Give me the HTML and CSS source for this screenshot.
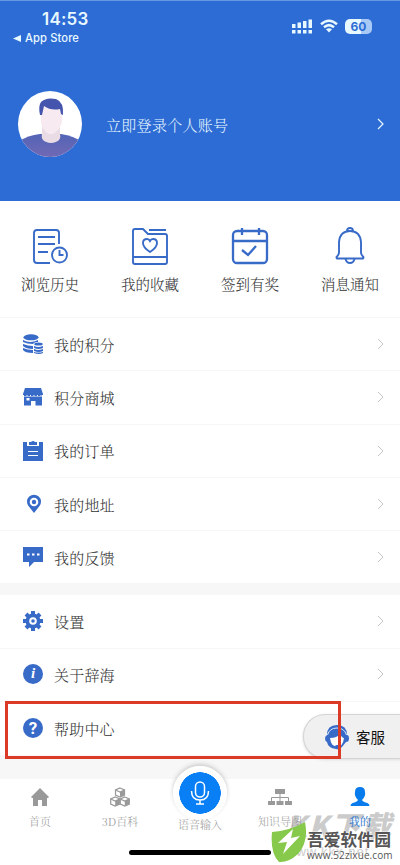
FILE: index.html
```html
<!DOCTYPE html>
<html lang="zh-CN">
<head>
<meta charset="utf-8">
<title>我的</title>
<link rel="stylesheet" href="styles.css">
</head>
<body>
<main class="screen">
  <header class="hero">
    <div class="status">
      <div class="clock"><b>14:53</b><span><svg width="8" height="7" viewBox="0 0 8 7" fill="#e8f8ff"><path d="M0 3.500L8 0v7z"/></svg>App Store</span></div>
      <div class="signals">
        <svg width="21" height="16" viewBox="0 0 21 16" fill="#e8f8ff"><path d="M0 5h3.500v4H0zM5.500 3.500H9V9H5.500zM11 2h3.500v7H11zM16.500 0.500H20V9h-3.500zM0 11h3.500v3.500H0zM5.500 11H9v3.500H5.500zM11 11h3.500v3.500H11zM16.500 11H20v3.500h-3.500z"/></svg>
        <svg width="18" height="14" viewBox="0 0 18 14" fill="none" stroke="#e8f8ff" stroke-width="2.500"><path d="M1 5.200q8-7 16 0M4 8.300q5-4.300 10 0"/><path d="M6 10.200q3-2 6 0L9 13.500z" fill="#e8f8ff" stroke="none"/></svg>
        <div class="battery">60</div>
      </div>
    </div>
    <div class="profile">
      <svg class="avatar" viewBox="0 0 64 66"><defs><clipPath id="face"><ellipse cx="32" cy="33" rx="32" ry="33"/></clipPath><linearGradient id="shirt" x1="0" y1="0" x2="0" y2="1"><stop stop-color="#5364b6"/><stop offset="1" stop-color="#7069b5"/></linearGradient></defs><g clip-path="url(#face)"><path fill="#fff" d="M0 0h64v66H0z"/><path fill="url(#shirt)" d="M0 66V51Q10 44 22 43H43Q56 45 64 51V66z"/><path fill="#e9dce5" d="M24 34h18v9q2 8-9 9-11-1-9-9z"/><path fill="#f7eaf0" d="M23 15h21v16q-2 8-9 12h-4q-7-4-8-12z"/><path fill="#4555ad" d="M22 24q-2-9 1-13 5-5 15-3 8 3 7 16l-2-1-1-5q-9 2-16-3l-2 9z"/></g></svg>
      <span>立即登录个人账号</span>
      <svg class="next" viewBox="0 0 7 12"><path d="M1 1l5 5-5 5"/></svg>
    </div>
  </header>

  <nav class="shortcuts">
    <a><svg viewBox="0 0 40 40"><path d="M20 37H7q-3 0-3-3V7q0-3 3-3h19q3 0 3 3v11M8 11h17M8 18h17M8 26h10"/><circle cx="29.500" cy="29" r="7.500"/><path d="M29.500 24v5h4"/></svg>浏览历史</a>
    <a><svg viewBox="0 0 40 40"><path d="M3 5q0-2 2-2h8l5 5h17q2 0 2 2v26q0 2-2 2H5q-2 0-2-2zM19 4h17M3 31h34"/><path d="M20 26q-7-4.500-7-9 0-4 4-4 2 0 3 2 1-2 3-2 4 0 4 4 0 4.500-7 9z"/></svg>我的收藏</a>
    <a><svg viewBox="0 0 40 40" class="bold"><rect x="3" y="5" width="34" height="32" rx="4"/><path d="M3 15h34M12 2v7M29 2v7M12 24l6 5 8-9"/></svg>签到有奖</a>
    <a><svg viewBox="0 0 40 40"><path d="M7 32.500q-1-1 0-2 2-2 2-4V16Q10 5 20 5t11 11v10.500q0 2 2 4 1 1 0 2zM15.500 33q1 4 4.500 4t4.500-4M17 5q0-3 3-3t3 3"/></svg>消息通知</a>
  </nav>

  <section class="group">
    <a class="row"><svg class="glyph" viewBox="0 0 20 20"><ellipse cx="8" cy="3.300" rx="7.500" ry="3"/><path d="M0 6q7 4 15 0v2q-4 0-5 2-6 0-10-2zM0 10q5 2 10 2v3q-7 0-10-3zM0 14q4 2 10 2v3q-8 0-10-3z"/><ellipse cx="15.500" cy="10" rx="4.300" ry="1.600"/><path d="M11 12q4 2 9 0v2q-4 2-9 0zM11 15q4 2 9 0v2q-4 2-9 0zM11 18q4 1 9 0v1q-4 2-9 0z"/></svg><span>我的积分</span><svg class="next" viewBox="0 0 7 12"><path d="M1 1l5 5-5 5"/></svg></a>
    <a class="row"><svg class="glyph" viewBox="0 0 20 20"><path d="M2 1h16l2 6v1H0V7zM1 9.500h18v9h-6.500V14H8v4.500H1z"/><path d="M1 8.300h18" fill="none" stroke="#386ac8" stroke-width="1.500" stroke-dasharray="2.500 1"/><path class="cut" d="M3.500 11h3v2.500h-3z"/></svg><span>积分商城</span><svg class="next" viewBox="0 0 7 12"><path d="M1 1l5 5-5 5"/></svg></a>
    <a class="row"><svg class="glyph" viewBox="0 0 20 20"><path d="M0 1h4v4h12V1h4v19H0zM6 1h2q2-2 4 0h2v3H6z"/><path class="cut" d="M5 10h10v1H5zM5 14h10v1H5z"/></svg><span>我的订单</span><svg class="next" viewBox="0 0 7 12"><path d="M1 1l5 5-5 5"/></svg></a>
    <a class="row"><svg class="glyph" viewBox="0 0 20 20"><path d="M11 19L5.500 12A7 7 0 1 1 16.500 12z"/><circle class="cut" cx="11" cy="8" r="4.300"/><circle cx="11" cy="8" r="2.200"/></svg><span>我的地址</span><svg class="next" viewBox="0 0 7 12"><path d="M1 1l5 5-5 5"/></svg></a>
    <a class="row"><svg class="glyph" viewBox="0 0 20 20"><path d="M0 0h20v15h-9l-5 5v-5H0z"/><path class="cut" d="M4 6.500h2.500v2H4zM9 6.500h2.500v2H9zM14 6.500h2.500v2H14z"/></svg><span>我的反馈</span><svg class="next" viewBox="0 0 7 12"><path d="M1 1l5 5-5 5"/></svg></a>
  </section>

  <section class="group second">
    <a class="row"><svg class="glyph" viewBox="0 0 20 20"><circle cx="10" cy="10" r="7.500"/><path d="M10 0v20M0 10h20M3 3l14 14M17 3L3 17" stroke="#386ac8" stroke-width="4"/><circle class="cut" cx="10" cy="10" r="3.800"/><circle cx="10" cy="10" r="1.800"/></svg><span>设置</span><svg class="next" viewBox="0 0 7 12"><path d="M1 1l5 5-5 5"/></svg></a>
    <a class="row"><i class="disc info">i</i><span>关于辞海</span><svg class="next" viewBox="0 0 7 12"><path d="M1 1l5 5-5 5"/></svg></a>
    <a class="row"><i class="disc">?</i><span>帮助中心</span></a>
    <div class="support"><svg viewBox="0 0 26 26"><path d="M3 11Q3 1 13 1t10 10q2 0 2 3.500T22 18l-4 5q-3 3-6 2-8-1-9-7-2-1-2-3.500T3 11z" fill="#386ac8"/><path d="M6 14q7 0 10-4 2 4 4 4-1 8-7 10-6-2-7-10z" fill="#fff"/><path d="M3.500 11q2-7 9.500-7t9.500 7" stroke="#dceaff" fill="none"/><path d="M5 19q3 4 8 4" stroke="#386ac8" stroke-width="1.500" fill="none"/><rect x="11" y="21" width="5" height="3.500" rx="1.700" fill="#386ac8"/></svg>客服</div>
    <div class="highlight"></div>
  </section>

  <footer class="tabs">
    <a><svg viewBox="0 0 20 20"><path d="M10 1l9 9-1 1h-1v8h-5v-6H8v6H3v-8H2l-1-1z"/></svg>首页</a>
    <a><svg viewBox="0 0 20 20"><g fill="#fff" stroke="#999" stroke-width="1.200"><path d="M10 1l4.500 2v5L10 10 5.500 8V3zM5.200 10l4.500 2v5l-4.500 2-4.500-2v-5zM14.800 10l4.500 2v5l-4.500 2-4.500-2v-5z"/><path d="M5.500 3l4.500 2 4.500-2M.7 12l4.500 2 4.800-2 4.800 2 4.500-2"/></g><path d="M10 5l4.500-2v5L10 10zM5.200 14l4.500-2v5l-4.500 2zM14.800 14l4.500-2v5l-4.500 2z"/></svg>3D百科</a>
    <a class="voice"><span class="mic"><svg viewBox="0 0 24 28"><rect x="7.500" y="3" width="9" height="15" rx="4.500"/><path d="M3.500 12q0 9 8.500 9t8.500-9M12 21v4M8 25h8"/></svg></span>语音输入</a>
    <a><svg class="tree" viewBox="0 0 24 20"><path d="M7 2h10v5H7zM0 14h7v4H0zM8.500 14h7v4h-7zM17 14h7v4h-7z"/><path d="M12 7v7M3.500 14v-3.500h17V14" fill="none" stroke="#999"/></svg>知识导图</a>
    <a class="current"><svg viewBox="0 0 20 20"><path d="M5 5q0-5 5-5t5 5q1 4-3 8 1 2 5.500 3 2 1 2 3H.5q0-2 2-3Q7 15 8 13 4 9 5 5z"/></svg>我的</a>
    <div class="home-bar"></div>
    <div class="ghost"><b>KK下载</b><span>www.kkx.net</span></div>
    <div class="watermark"><svg viewBox="0 0 36 42"><path d="M1 11Q18 10 34 1q4 20-7 32-10 9-19 8Q-1 32 1 11z" fill="#87c94b"/><path d="M22 8L7 22l9-1-4 12 17-18-9 2z" fill="#fff"/></svg><div><b>吾爱软件园</b><span>www.52zixue.com</span></div></div>
  </footer>
</main>
</body>
</html>
```
FILE: styles.css
```css
* { box-sizing: border-box; }
body { margin: 0; background: #fff; color: #333; font-family: "Noto Serif CJK SC", "Noto Sans CJK SC", serif; font-weight: 300; }
svg { display: block; flex: none; }
.screen { width: 400px; height: 865px; overflow: hidden; display: flex; flex-direction: column; }
.hero { height: 201px; flex: none; background: #2d6cd5; border-top: 1px solid #6698e4; color: #e8f8ff; }
.status { height: 73px; padding: 8px 28px 0 13px; display: flex; justify-content: space-between; }
.clock { font-family: Inter, sans-serif; display: flex; flex-direction: column; }
.clock b { font-size: 17px; line-height: 20px; font-weight: 600; padding-left: 29px; letter-spacing: .2px; }
.clock span { display: flex; align-items: center; gap: 4px; font-size: 11.200px; line-height: 19px; font-weight: 500; letter-spacing: .1px; }
.signals { display: flex; align-items: flex-start; gap: 7px; padding-top: 10px; }
.battery { width: 27px; height: 15px; border-radius: 5px; background: linear-gradient(90deg, #e8f8ff 60%, #a8c8f5 60%); color: #2d6cd5; font: 700 12px/15px Inter, sans-serif; text-align: center; }
.profile { height: 100px; padding: 0 16px 0 18px; display: flex; align-items: center; }
.avatar { width: 64px; height: 66px; margin-right: 24px; }
.profile span { font-size: 15px; flex: 1; letter-spacing: .3px; }
.next { width: 7px; height: 12px; fill: none; stroke: #c5c5c5; stroke-width: 1; }
.profile .next { stroke: #e8f8ff; stroke-width: 1.200; }
.shortcuts { height: 116px; flex: none; display: grid; grid-template-columns: repeat(4, 1fr); padding-top: 25px; }
.shortcuts a { display: flex; flex-direction: column; align-items: center; font-size: 14.500px; line-height: 24px; gap: 6px; }
.shortcuts svg { width: 40px; height: 40px; fill: none; stroke: #386ac8; stroke-width: 1.900; }
.shortcuts .bold { stroke-width: 2.300; }
.group { flex: none; border-top: 1px solid #f7f7f7; }
.row { height: 53.300px; padding: 0 16px 0 23px; display: flex; align-items: center; border-bottom: 1px solid #f7f7f7; background: #fff; }
.row > span { flex: 1; font-size: 15px; margin-left: 11px; letter-spacing: .2px; }
.glyph { width: 20px; height: 20px; fill: #386ac8; }
.cut { fill: #fff; }
.disc { width: 20px; height: 20px; border-radius: 50%; background: #386ac8; color: #fff; font: bold 17px/20px Roboto, sans-serif; text-align: center; }
.info { font: italic bold 15px/19px "Liberation Serif", serif; }
.second { position: relative; height: 195px; border-top: 11px solid #f7f7f7; background: #f7f7f7; }
.second .row { padding-bottom: 1px; }
.second .row:nth-child(3) { border: 0; }
.support { position: absolute; left: 303px; top: 119px; width: 98px; height: 45px; border: 1.500px solid #d4d4d6; border-right: 0; border-radius: 22px 0 0 22px; background: #f0f0f0; display: flex; align-items: center; padding-left: 20px; gap: 6px; color: #111; font: 400 14.500px "Noto Sans CJK SC", sans-serif; box-shadow: 0 1px 3px #ddd; }
.support svg { width: 26px; height: 26px; }
.highlight { position: absolute; left: 5px; top: 106px; width: 336px; height: 58px; border: 3px solid #db3b26; }
.tabs { position: relative; flex: 1; display: grid; grid-template-columns: repeat(5, 1fr); padding-top: 8px; background: #fff; }
.tabs a { position: relative; z-index: 1; display: flex; flex-direction: column; align-items: center; gap: 5px; color: #999; font-size: 11px; line-height: 18px; white-space: nowrap; }
.tabs a > svg { width: 20px; height: 20px; fill: #999; }
.tabs .tree { width: 24px; }
.tabs .current { color: #3a80cf; font-weight: 500; }
.tabs .current svg { fill: #087ced; }
.tabs .voice { margin-top: -21px; gap: 0; }
.mic { width: 54px; height: 54px; flex: none; margin-bottom: -5px; border-radius: 50%; background: radial-gradient(circle, #087ff5 20.500px, #fff 21px); display: flex; align-items: center; justify-content: center; box-shadow: 0 -2px 4px #ccc; }
.mic svg { width: 24px; height: 28px; fill: none; stroke: #fff; stroke-width: 1.500; }
.home-bar { position: absolute; left: 129px; top: 71px; width: 142px; height: 5px; border-radius: 3px; background: #000; }
.ghost { position: absolute; left: 286px; top: 27px; color: #aaa; opacity: .6; display: flex; flex-direction: column; white-space: nowrap; }
.ghost b { font: italic 900 29px/36px "Noto Sans CJK SC", sans-serif; letter-spacing: 2px; }
.ghost span { font: 13px/20px "Liberation Sans", sans-serif; letter-spacing: 1px; }
.watermark { position: absolute; z-index: 2; left: 271px; top: 42px; display: flex; }
.watermark svg { width: 36px; height: 42px; }
.watermark div { display: flex; flex-direction: column; white-space: nowrap; color: #555; text-shadow: 0 0 2px #fff, 0 0 2px #fff; padding-top: 8px; }
.watermark b { font: 700 16.800px/21px "Noto Sans CJK SC", sans-serif; }
.watermark span { font: 10px/10px "Open Sans", sans-serif; letter-spacing: .1px; }
```
